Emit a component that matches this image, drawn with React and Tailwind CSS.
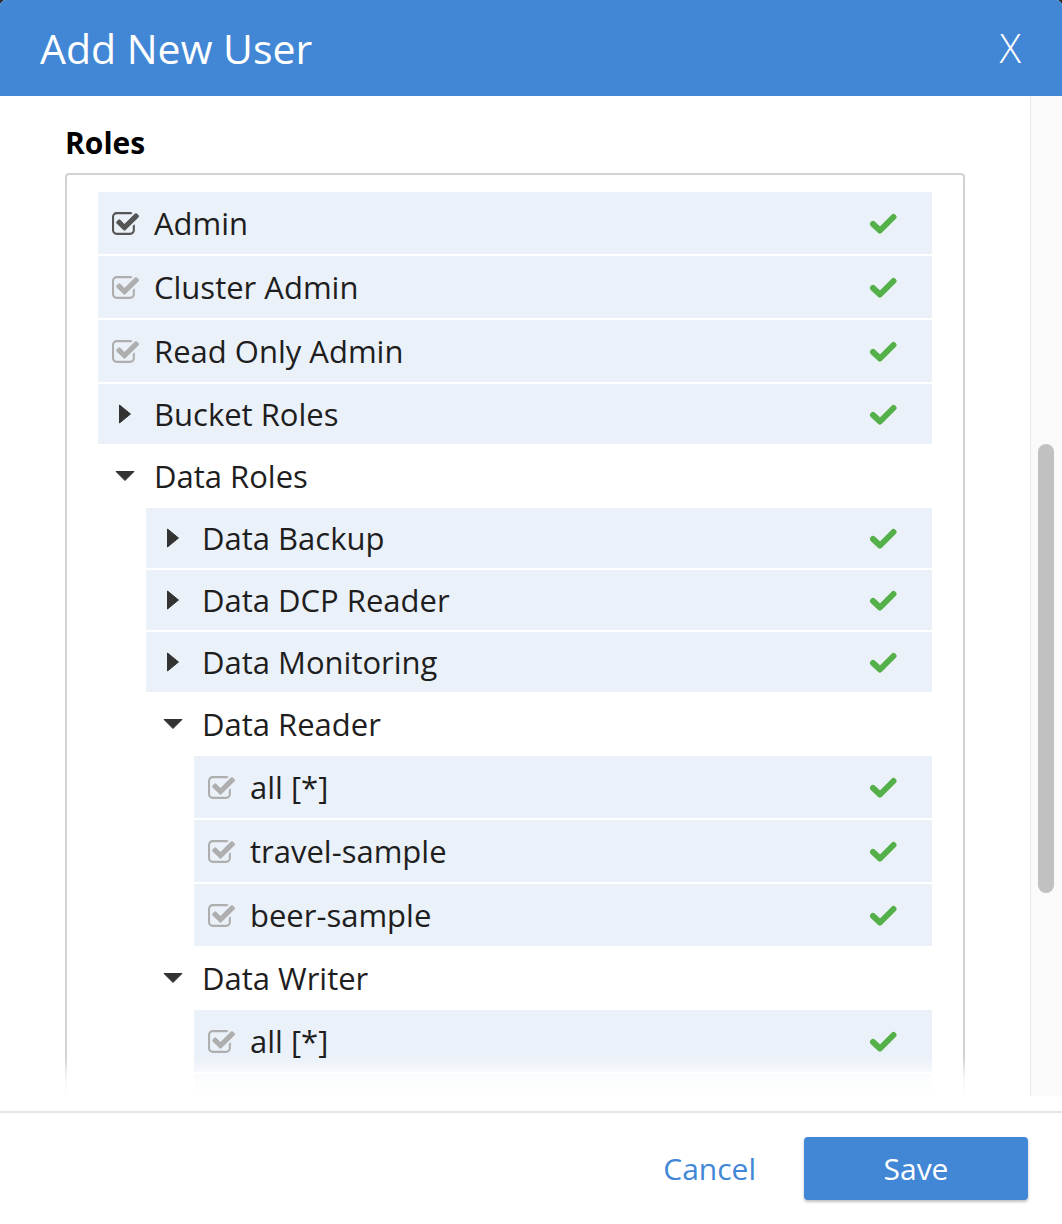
import React from 'react';

const buckets = [
  { label: 'all [*]', type: 'check' },
  { label: 'travel-sample', type: 'check' },
  { label: 'beer-sample', type: 'check' },
];

const roles = [
  { label: 'Admin', type: 'check', dark: true },
  { label: 'Cluster Admin', type: 'check' },
  { label: 'Read Only Admin', type: 'check' },
  { label: 'Bucket Roles', type: 'closed' },
  {
    label: 'Data Roles',
    type: 'open',
    children: [
      { label: 'Data Backup', type: 'closed' },
      { label: 'Data DCP Reader', type: 'closed' },
      { label: 'Data Monitoring', type: 'closed' },
      { label: 'Data Reader', type: 'open', children: buckets },
      { label: 'Data Writer', type: 'open', children: buckets },
    ],
  },
];

function CheckSquare({ dark }) {
  return (
    <svg width="27" height="23" viewBox="64 128 1663 1408" className={dark ? 'fill-[#555555]' : 'fill-[#aeaeae]'}>
      <path d="M1472 930v318q0 119-84.5 203.5t-203.5 84.5h-832q-119 0-203.5-84.5t-84.5-203.5v-832q0-119 84.5-203.5t203.5-84.5h832q63 0 117 25 15 7 18 23 3 17-9 29l-49 49q-10 10-23 10-3 0-9-2-23-6-45-6h-832q-66 0-113 47t-47 113v832q0 66 47 113t113 47h832q66 0 113-47t47-113v-254q0-13 9-22l64-64q10-10 23-10 6 0 12 3 20 8 20 29zm231-489l-814 814q-24 24-57 24t-57-24l-430-430q-24-24-24-57t24-57l110-110q24-24 57-24t57 24l263 263 647-647q24-24 57-24t57 24l110 110q24 24 24 57t-24 57z" />
    </svg>
  );
}

function GreenCheck() {
  return (
    <svg width="30" height="22" viewBox="0 0 30 22">
      <polyline points="5,12 12,18.5 25.5,5" fill="none" stroke="#54b048" strokeWidth="6" strokeLinecap="round" strokeLinejoin="round" />
    </svg>
  );
}

function Caret({ open }) {
  return open ? (
    <svg width="20" height="10" viewBox="0 0 20 10">
      <polygon points="1,0.5 19,0.5 10,9.5" fill="#333333" strokeLinejoin="round" stroke="#333333" strokeWidth="1" />
    </svg>
  ) : (
    <svg width="12" height="20" viewBox="0 0 12 20">
      <polygon points="0.5,1 11.5,10 0.5,19" fill="#333333" strokeLinejoin="round" stroke="#333333" strokeWidth="1" />
    </svg>
  );
}

function RoleRow({ node }) {
  const open = node.type === 'open';
  return (
    <div>
      <div
        className={
          'flex items-center mb-[2px] ' +
          (node.type === 'check' ? 'h-[62px] ' : 'h-[60px] ') +
          (open ? 'bg-white' : 'bg-[#ebf1f9]')
        }
      >
        <div className="ml-[12px] w-[30px] flex justify-center">
          {node.type === 'check' ? <CheckSquare dark={node.dark} /> : <Caret open={open} />}
        </div>
        <span className="ml-[14px] flex-1 text-[31px] text-[#1e1e1e] leading-none whitespace-nowrap">{node.label}</span>
        {!open && (
          <div className="mr-[34px]">
            <GreenCheck />
          </div>
        )}
      </div>
      {open && node.children && (
        <div className="ml-[48px]">
          {node.children.map((child, i) => (
            <RoleRow key={i} node={child} />
          ))}
        </div>
      )}
    </div>
  );
}

export default function App() {
  return (
    <div className="min-h-screen bg-[#2a2a2a]" style={{ fontFamily: '"Open Sans", "Liberation Sans", sans-serif' }}>
      <div className="w-[1062px] h-[1224px] flex flex-col bg-white rounded-t-[6px] overflow-hidden">
        {/* Header */}
        <div className="h-[96px] shrink-0 bg-[#4287d6] flex items-center justify-between pl-[40px] pr-[41px]">
          <h1 className="text-[41px] text-white leading-none">Add New User</h1>
          <button className="text-[40px] font-light text-white leading-none">X</button>
        </div>

        {/* Body */}
        <div className="h-[1000px] shrink-0 flex">
          <div className="relative flex-1 overflow-hidden px-[65px] pt-[26px]">
            <h2 className="text-[30px] font-bold text-black leading-[42px] mb-[9px]">Roles</h2>
            <div className="border-2 border-[#d2d2d2] rounded-[4px] px-[31px] pt-[17px] pb-[20px]">
              {roles.map((node, i) => (
                <RoleRow key={i} node={node} />
              ))}
            </div>
            {/* fade at the bottom edge of the scroll area */}
            <div className="absolute bottom-0 left-0 right-0 h-[38px] bg-linear-to-b from-white/0 via-white/80 to-white" />
          </div>
          <div className="w-[32px] bg-[#fafafa] border-l border-[#e8e8e8]">
            <div className="mt-[348px] ml-[7px] h-[449px] w-[16px] rounded-full bg-[#c1c1c1]" />
          </div>
        </div>

        <div className="h-[15px] shrink-0" />

        {/* Footer */}
        <div className="flex-1 border-t-2 border-[#e6e6e6] flex items-center justify-end pr-[34px] gap-[48px]">
          <button className="text-[30px] text-[#4287d6] leading-none">Cancel</button>
          <button className="w-[224px] h-[63px] bg-[#4287d6] rounded-[4px] shadow-[0_2px_3px_rgba(0,0,0,0.25)] text-[30px] text-white leading-none">
            Save
          </button>
        </div>
      </div>
    </div>
  );
}
